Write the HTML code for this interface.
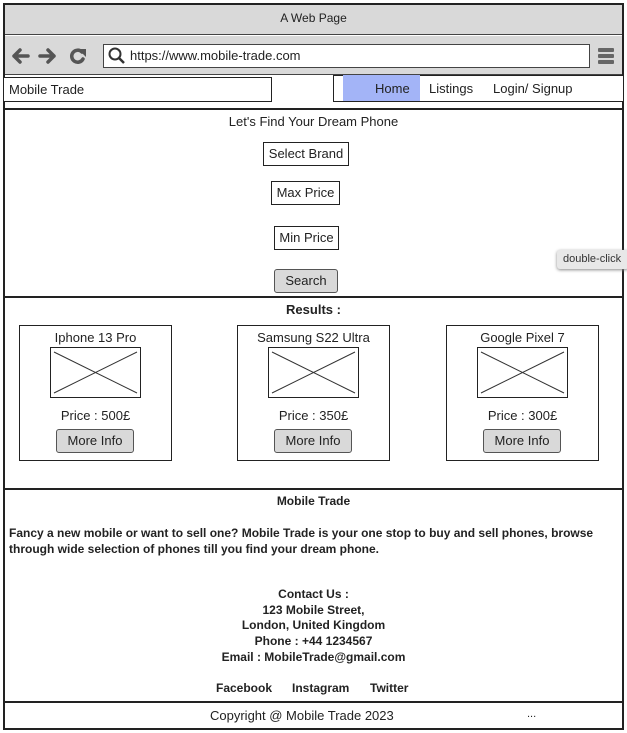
<!DOCTYPE html>
<html><head><style>
*{margin:0;padding:0;box-sizing:border-box}
body{width:627px;height:733px;background:#fff;position:relative;overflow:hidden;font-family:"Liberation Sans",sans-serif;color:#222;font-size:13px}
.a{position:absolute}
.c{text-align:center}
.box{position:absolute;border:1px solid #222;background:#fff}
.btn{position:absolute;border:1px solid #555;background:#d9d9d9;border-radius:3px;text-align:center}
b{font-weight:bold}
</style></head><body>
<div class="a" style="left:3px;top:3px;width:621px;height:727px;border:2px solid #222"></div>
<div class="a c" style="left:5px;top:5px;width:617px;height:30px;background:#d9d9d9;border-bottom:1px solid #444;line-height:26px;font-size:12px">A Web Page</div>
<div class="a" style="left:5px;top:36px;width:617px;height:39px;background:#d9d9d9;border-bottom:1px solid #444"></div>
<svg class="a" style="left:10px;top:45px" width="80" height="22" viewBox="0 0 80 22">
<g stroke="#555" stroke-width="3.5" fill="none" stroke-linecap="round" stroke-linejoin="round">
<path d="M18 11H4M10 5L4 11L10 17"/><path d="M30 11H44M38 5L44 11L38 17"/>
<path d="M72 7A6 6 0 1 0 73 14"/></g><path d="M68 4L76 4L76 12Z" fill="#555"/></svg>
<div class="a" style="left:103px;top:44px;width:487px;height:24px;background:#fff;border:1px solid #444;font-size:13px;line-height:22px;padding-left:26px">https://www.mobile-trade.com</div>
<svg class="a" style="left:107px;top:47px" width="20" height="18"><circle cx="8" cy="7" r="5.5" stroke="#333" stroke-width="2" fill="none"/><path d="M12 11L17 16" stroke="#333" stroke-width="2.5"/></svg>
<div class="a" style="left:598px;top:48px;width:16px;height:4px;background:#666;border-radius:1px"></div>
<div class="a" style="left:598px;top:54px;width:16px;height:4px;background:#666;border-radius:1px"></div>
<div class="a" style="left:598px;top:60px;width:16px;height:4px;background:#666;border-radius:1px"></div>
<div class="box" style="left:3px;top:77px;width:269px;height:25px;padding-left:5px;line-height:23px">Mobile Trade</div>
<div class="box" style="left:333px;top:75px;width:291px;height:27px"></div>
<div class="a" style="left:343px;top:75px;width:77px;height:26px;background:#a3b4f7"></div>
<div class="a" style="left:375px;top:81px">Home</div>
<div class="a" style="left:429px;top:81px">Listings</div>
<div class="a" style="left:493px;top:81px">Login/ Signup</div>
<div class="a" style="left:3px;top:108px;width:621px;height:2px;background:#222"></div>
<div class="a c" style="left:3px;top:114px;width:621px">Let's Find Your Dream Phone</div>
<div class="box c" style="left:263px;top:142px;width:86px;height:24px;line-height:22px">Select Brand</div>
<div class="box c" style="left:271px;top:181px;width:69px;height:24px;line-height:22px">Max Price</div>
<div class="box c" style="left:274px;top:226px;width:65px;height:24px;line-height:22px">Min Price</div>
<div class="btn" style="left:274px;top:269px;width:64px;height:24px;line-height:22px">Search</div>
<div class="a" style="left:557px;top:250px;width:72px;height:19px;background:#e8e8e8;border-radius:3px;box-shadow:0 1px 3px #888;font-size:11px;line-height:18px;padding-left:6px;color:#333">double-click</div>
<div class="a" style="left:3px;top:296px;width:621px;height:2px;background:#222"></div>
<div class="a c" style="left:3px;top:302px;width:621px"><b>Results :</b></div>
<div class="box" style="left:19px;top:325px;width:153px;height:136px"></div>
<div class="box" style="left:237px;top:325px;width:153px;height:136px"></div>
<div class="box" style="left:446px;top:325px;width:153px;height:136px"></div>
<div class="a c" style="left:19px;top:330px;width:153px">Iphone 13 Pro</div>
<div class="a c" style="left:237px;top:330px;width:153px">Samsung S22 Ultra</div>
<div class="a c" style="left:446px;top:330px;width:153px">Google Pixel 7</div>
<svg class="a" style="left:50px;top:347px" width="92" height="52"><rect x="0.5" y="0.5" width="90" height="50" fill="#fff" stroke="#222"/><path d="M4 5L87 46M4 46L87 5" stroke="#333"/></svg>
<svg class="a" style="left:268px;top:347px" width="92" height="52"><rect x="0.5" y="0.5" width="90" height="50" fill="#fff" stroke="#222"/><path d="M4 5L87 46M4 46L87 5" stroke="#333"/></svg>
<svg class="a" style="left:477px;top:347px" width="92" height="52"><rect x="0.5" y="0.5" width="90" height="50" fill="#fff" stroke="#222"/><path d="M4 5L87 46M4 46L87 5" stroke="#333"/></svg>
<div class="a c" style="left:19px;top:408px;width:153px">Price : 500£</div>
<div class="a c" style="left:237px;top:408px;width:153px">Price : 350£</div>
<div class="a c" style="left:446px;top:408px;width:153px">Price : 300£</div>
<div class="btn" style="left:56px;top:429px;width:78px;height:24px;line-height:22px">More Info</div>
<div class="btn" style="left:274px;top:429px;width:78px;height:24px;line-height:22px">More Info</div>
<div class="btn" style="left:483px;top:429px;width:78px;height:24px;line-height:22px">More Info</div>
<div class="a" style="left:3px;top:488px;width:621px;height:2px;background:#222"></div>
<div class="a c" style="left:3px;top:494px;width:621px;font-size:12px"><b>Mobile Trade</b></div>
<div class="a" style="left:9px;top:525px;width:612px;font-size:12px;line-height:16px"><b>Fancy a new mobile or want to sell one? Mobile Trade is your one stop to buy and sell phones, browse through wide selection of phones till you find your dream phone.</b></div>
<div class="a c" style="left:3px;top:587px;width:621px;font-size:12px;line-height:15.7px"><b>Contact Us :<br>123 Mobile Street,<br>London, United Kingdom<br>Phone : +44 1234567<br>Email : MobileTrade@gmail.com</b></div>
<div class="a" style="left:216px;top:681px;font-size:12px"><b>Facebook</b></div>
<div class="a" style="left:292px;top:681px;font-size:12px"><b>Instagram</b></div>
<div class="a" style="left:370px;top:681px;font-size:12px"><b>Twitter</b></div>
<div class="a" style="left:3px;top:701px;width:621px;height:2px;background:#222"></div>
<div class="a" style="left:210px;top:708px">Copyright @ Mobile Trade 2023</div>
<div class="a" style="left:527px;top:708px;font-size:11px">...</div>
</body></html>
